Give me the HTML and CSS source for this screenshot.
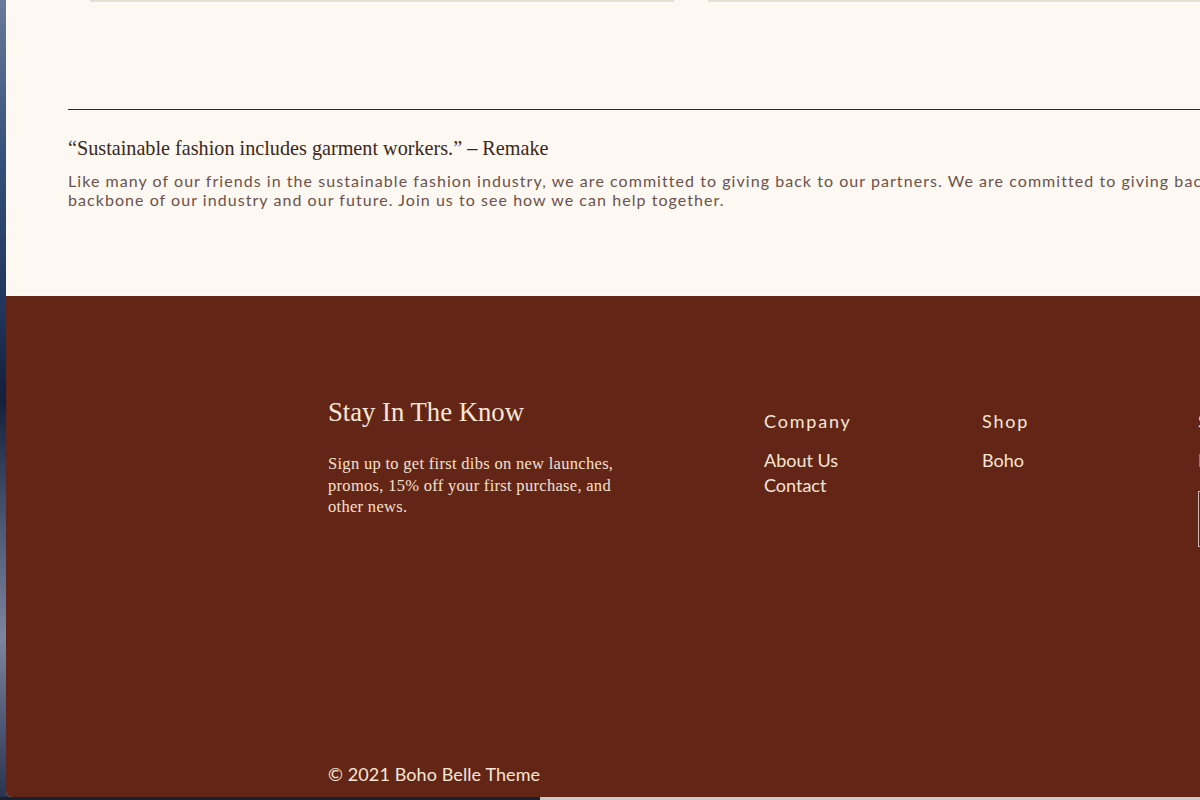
FILE: index.html
```html
<!DOCTYPE html>
<html lang="en">
<head>
<meta charset="utf-8">
<title>Boho Belle Theme</title>
<link rel="stylesheet" href="styles.css">
</head>
<body>
<div class="desktop">
  <div class="desk-edge"></div>
  <div class="window">
    <div class="image-edges">
      <div class="image-edge first"></div>
      <div class="image-edge second"></div>
    </div>
    <section class="story">
      <hr class="rule">
      <p class="quote">“Sustainable fashion includes garment workers.” – Remake</p>
      <p class="story-text">Like many of our friends in the sustainable fashion industry, we are committed to giving back to our partners. We are committed to giving back to the garment workers who are the<br>backbone of our industry and our future. Join us to see how we can help together.</p>
    </section>
    <footer class="footer">
      <div class="footer-cols">
        <div class="newsletter">
          <h2 class="news-title">Stay In The Know</h2>
          <p class="news-text">Sign up to get first dibs on new launches,<br>promos, 15% off your first purchase, and<br>other news.</p>
        </div>
        <nav class="link-col">
          <h3 class="col-title">Company</h3>
          <a class="col-link" href="#">About Us</a>
          <a class="col-link" href="#">Contact</a>
        </nav>
        <nav class="link-col">
          <h3 class="col-title">Shop</h3>
          <a class="col-link" href="#">Boho</a>
        </nav>
        <div class="link-col">
          <h3 class="col-title">Subscribe</h3>
          <a class="col-link" href="#">Instagram</a>
          <div class="email-box"></div>
        </div>
      </div>
      <p class="copyright">© 2021 Boho Belle Theme</p>
    </footer>
  </div>
</div>
<div class="dock-edge"></div>
</body>
</html>
```
FILE: styles.css
```css
html, body {
  margin: 0;
  padding: 0;
  width: 1200px;
  height: 800px;
  overflow: hidden;
  background: #1b2439;
}

.desktop {
  display: flex;
  height: 797px;
}

.desk-edge {
  flex: 0 0 6px;
  background: linear-gradient(180deg, #6a7a98 0%, #34507a 20%, #1f3458 40%, #141f3a 50%, #4a5470 65%, #7d84a0 80%, #2a3350 100%);
}

.window {
  flex: 0 0 1600px;
  display: flex;
  flex-direction: column;
  background: #fdf8f2;
  border-bottom-left-radius: 5px;
  overflow: hidden;
}

.image-edges {
  display: flex;
  gap: 34px;
  padding-left: 84px;
  height: 2px;
  flex: 0 0 2px;
}

.image-edge {
  height: 2px;
  background: #e6dfd6;
}

.image-edge.first { width: 585px; }
.image-edge.second { width: 900px; }

.story {
  padding: 107px 0 0 62px;
  flex: 0 0 294px;
  box-sizing: border-box;
}

.rule {
  margin: 0;
  border: 0;
  border-top: 1px solid #3a261e;
  height: 0;
  width: 1500px;
}

.quote {
  margin: 26px 0 0;
  font-family: "Liberation Serif", "Times New Roman", serif;
  font-size: 20.2px;
  line-height: 24px;
  color: #3a2820;
  white-space: nowrap;
}

.story-text {
  margin: 11px 0 0;
  font-family: Lato, "Liberation Sans", sans-serif;
  font-size: 16px;
  line-height: 19px;
  letter-spacing: 1.05px;
  color: #6b524b;
  white-space: nowrap;
}

.footer {
  flex: 1;
  display: flex;
  flex-direction: column;
  background: #632616;
  padding: 101px 0 11px 322px;
  color: #f7e6d6;
}

.footer-cols {
  display: grid;
  grid-template-columns: 436px 218px 216px 300px;
  align-items: start;
}

.news-title {
  margin: 0;
  font-family: "Liberation Serif", "Times New Roman", serif;
  font-weight: normal;
  font-size: 26.7px;
  line-height: 31px;
  color: #f8e7d7;
}

.news-text {
  margin: 25px 0 0;
  font-family: "Liberation Serif", "Times New Roman", serif;
  font-size: 16.5px;
  line-height: 21.5px;
  letter-spacing: 0.3px;
  color: #f3e0d0;
}

.link-col {
  display: flex;
  flex-direction: column;
  margin-top: 12px;
}

.col-title {
  margin: 0 0 15px;
  font-family: Lato, "Liberation Sans", sans-serif;
  font-weight: normal;
  font-size: 18px;
  line-height: 24px;
  letter-spacing: 1.8px;
  color: #f7e6d6;
}

.col-link {
  font-family: Lato, "Liberation Sans", sans-serif;
  font-size: 18px;
  line-height: 24.6px;
  letter-spacing: 0;
  color: #f7e6d6;
  text-decoration: none;
}

.email-box {
  margin-top: 18px;
  width: 260px;
  height: 56px;
  border: 1px solid #cdb8b0;
  box-sizing: border-box;
}

.copyright {
  margin: auto 0 0;
  font-family: Lato, "Liberation Sans", sans-serif;
  font-size: 18px;
  line-height: 24px;
  letter-spacing: 0.1px;
  color: #f7e6d6;
}

.dock-edge {
  height: 3px;
  background: linear-gradient(90deg, #1b2030 0%, #1b2030 45%, #c9c9c9 45%, #c9c9c9 100%);
}
```
